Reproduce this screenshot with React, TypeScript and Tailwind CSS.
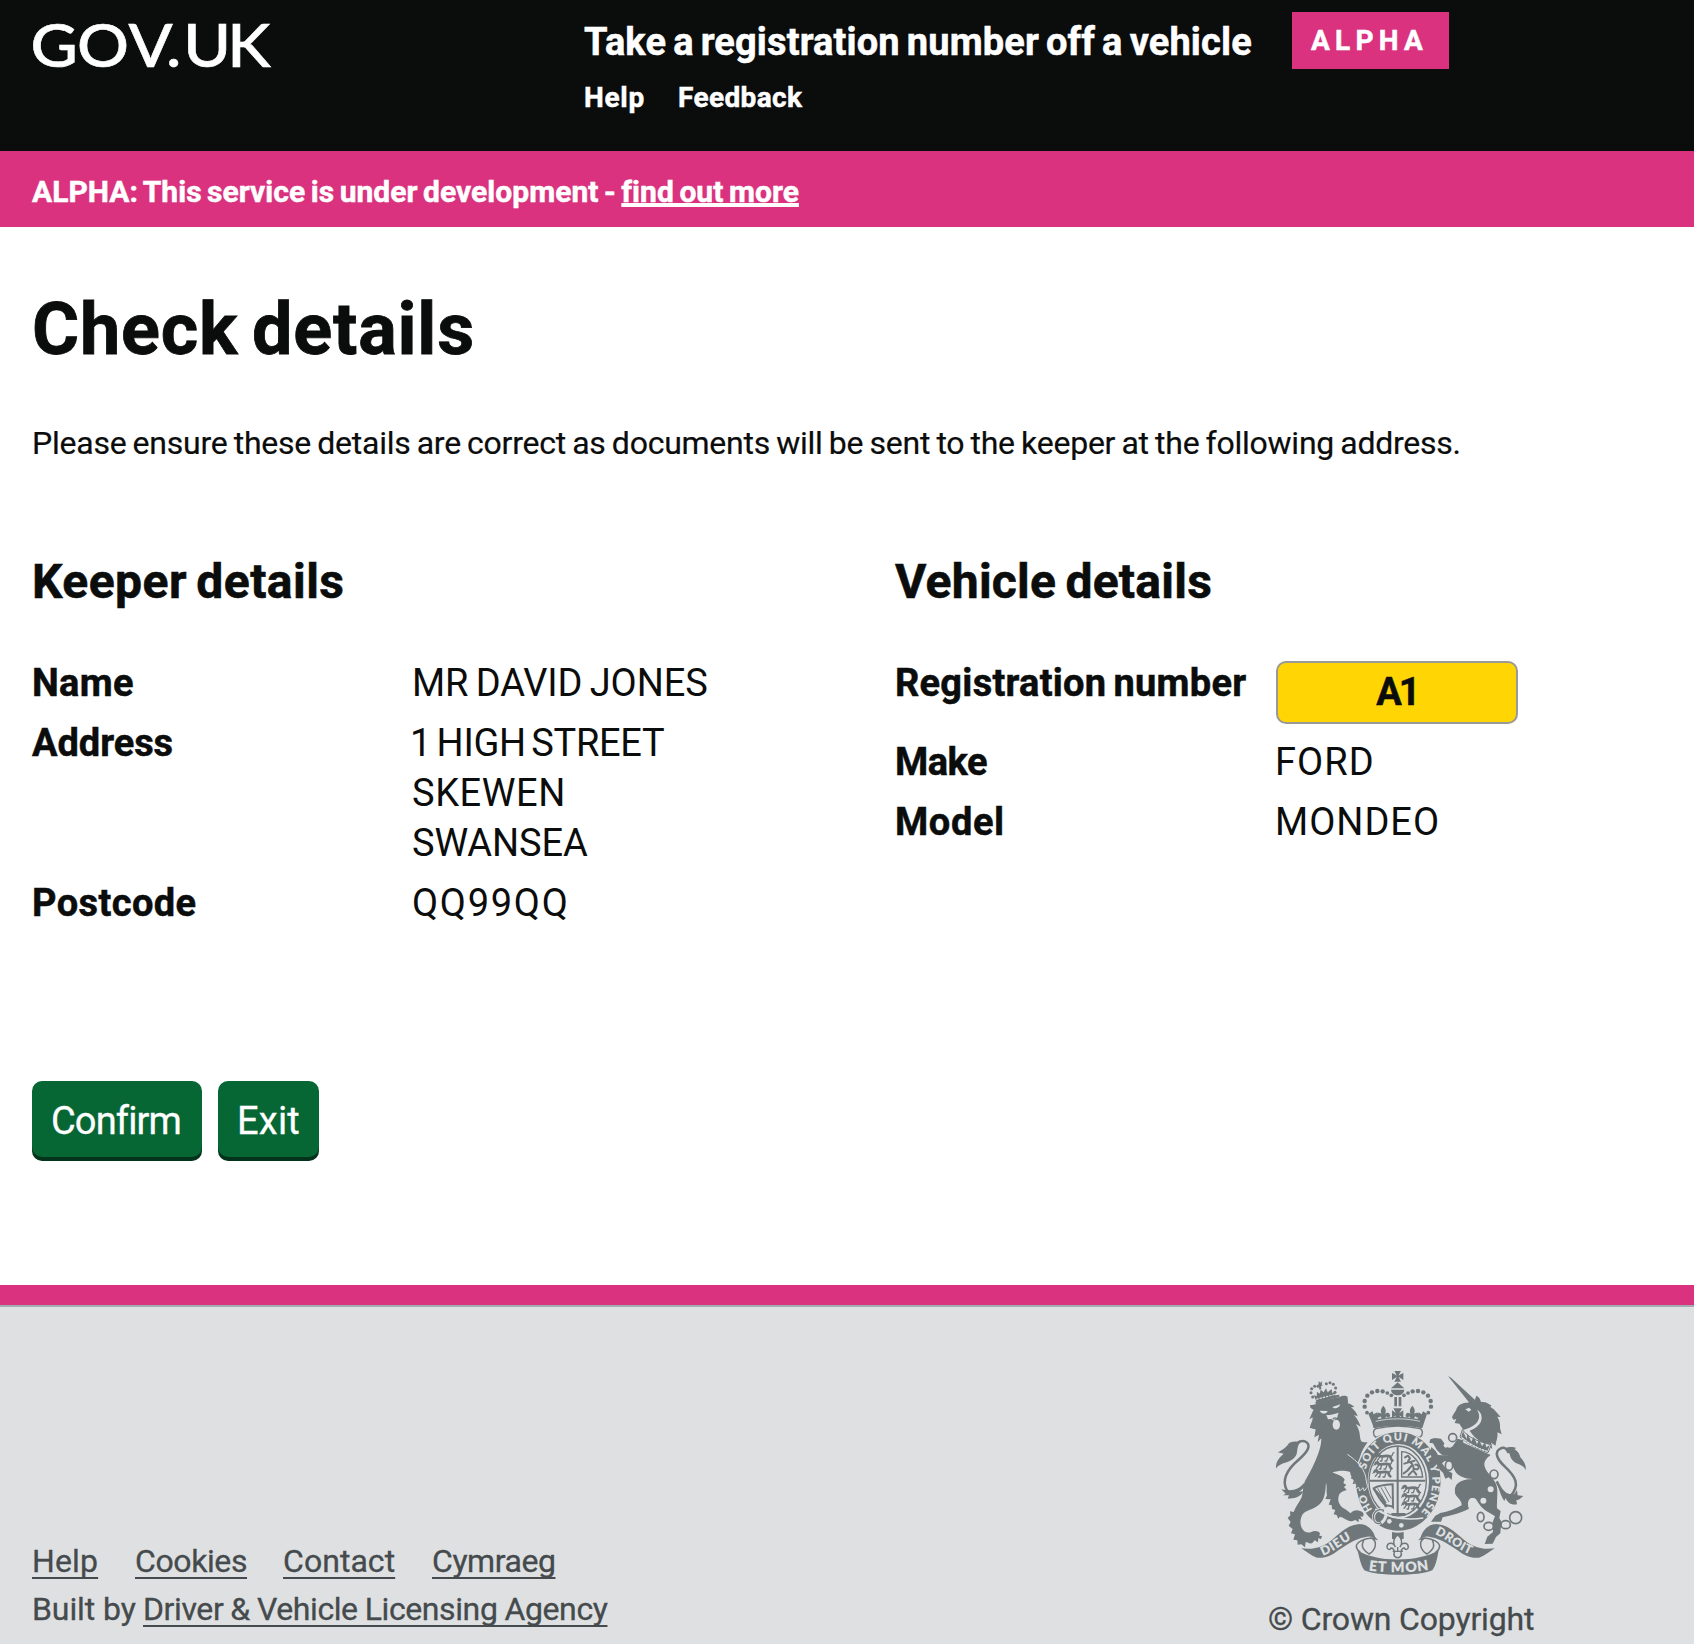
import React from 'react';

const INK = '#6f777b';
const PAPER = '#dee0e2';

function Logo() {
  return (
    <svg width="280" height="80" viewBox="0 0 280 80" className="block" role="img" aria-label="GOV.UK">
      <text
        transform="scale(1.08 1)"
        x="28.3 71.2 119 153.6 169.6 210.4"
        y="67"
        fontFamily="Lato, sans-serif"
        fontSize="60"
        fontWeight="500"
        fill="#ffffff"
        stroke="#ffffff"
        strokeWidth="0.6"
      >
        GOV.UK
      </text>
    </svg>
  );
}

const crownPearls: [number, number, number][] = [
  [351, 173, 5], [344, 155, 6], [344, 138, 6], [352, 122, 6], [366, 112, 6], [382, 108, 6], [398, 109, 6], [412, 114, 5], [424, 121, 5],
  [535, 173, 5], [543, 155, 6], [542, 138, 6], [534, 122, 6], [520, 112, 6], [504, 108, 6], [488, 109, 6], [474, 114, 5], [462, 121, 5],
];

const lionPearls: [number, number, number][] = [
  [188, 126, 4], [183, 113, 4], [185, 101, 4], [194, 94, 4], [204, 94, 4], [255, 112, 4], [257, 99, 4], [250, 88, 4], [240, 83, 4], [229, 86, 4],
];

/* A passant lion, three of which fill an England quarter. */
function Passant({ x, y }: { x: number; y: number }) {
  return (
    <g transform={`translate(${x} ${y})`} fill="none" stroke={INK} strokeWidth="4.5" strokeLinecap="round" strokeLinejoin="round">
      <path d="M0 4 C2 -3 9 -2 9 4 C18 8 32 0 42 6 C44 10 42 14 48 17" strokeWidth="8" />
      <path d="M10 8 L3 17 M18 9 L16 19 L12 19 M34 9 L31 19 L26 19 M42 5 C54 4 44 -5 53 -6" strokeWidth="4" />
      <path d="M0 4 L-5 8" strokeWidth="3" />
    </g>
  );
}

function Fleur({ x, y, s = 1 }: { x: number; y: number; s?: number }) {
  return (
    <path
      transform={`translate(${x} ${y}) scale(${s})`}
      fill={INK}
      d="M0 -24 C9 -14 10 -6 4 5 C8 -3 18 -5 21 5 C22 12 15 16 11 11 C9 9 6 12 5 18 L9 26 H-9 L-5 18 C-6 12 -9 9 -11 11 C-15 16 -22 12 -21 5 C-18 -5 -8 -3 -4 5 C-10 -6 -9 -14 0 -24Z"
    />
  );
}

function Crest() {
  return (
    <svg width="300" height="240" viewBox="0 0 900 720" className="block" role="img" aria-label="Royal coat of arms">
      <defs>
        <path id="motto" d="M343 384 A101 124 0 0 1 547 380 A101 124 0 0 1 450 503" />
        <path id="motto-start" d="M392 488 A101 124 0 0 1 343 366" />
        <path id="ribbon-left" d="M219 602 C258 588 282 560 325 543" />
        <path id="ribbon-right" d="M554 537 C597 556 626 590 682 606" />
        <path id="ribbon-mid" d="M356 646 C400 654 490 654 536 645" />
      </defs>

      {/* Royal crown */}
      <g fill={INK}>
        <path d="M426 54 L434 58 L440 62 L437 55 L433 48 H453 L449 55 L446 62 L452 58 L460 54 V75 L452 70 L446 66 L449 73 L453 80 H433 L437 73 L440 66 L434 70 L426 75Z" />
        <path d="M443 82 L463 100 H423Z" />
        <path d="M423 104 H463 C462 114 454 121 443 121 C432 121 424 114 423 104Z" />
        <path d="M433 126 H441 V154 H433Z M446 126 H454 V154 H446Z" />
        <path d="M426 166 L438 174 L430 160 H456 L448 174 L460 166 V190 L448 181 L456 197 H430 L438 181 L426 190Z" />
        {crownPearls.map(([x, y, r]) => (
          <circle key={`${x}-${y}`} cx={x} cy={y} r={r + 0.6} />
        ))}
        <Fleur x={400} y={175} s={0.95} />
        <Fleur x={487} y={175} s={0.95} />
        <path d="M355 176 L367 169 L371 178 L382 172 L384 192 C425 184 461 184 503 192 L505 172 L515 178 L519 169 L531 176 C527 190 523 200 517 220 C470 211 418 211 371 220 C367 202 360 190 355 176Z" />
      </g>
      <path d="M377 199 C420 189 466 189 510 199" fill="none" stroke={PAPER} strokeWidth="2.5" />
      <path d="M378 221 C420 211 466 211 510 221 C520 225 519 240 510 247 C466 230 420 230 378 247 C368 240 368 225 378 221Z" fill={PAPER} stroke={INK} strokeWidth="4" />

      {/* Lion */}
      <g fill={INK}>
        {lionPearls.map(([x, y, r]) => (
          <circle key={`${x}-${y}`} cx={x} cy={y} r={r + 0.6} />
        ))}
        <path d="M206 78 L211 83 L217 79 L215 88 L219 92 L213 92 L214 103 L208 104 L207 94 L202 92 L206 87Z" />
        <path d="M191 120 L200 124 L201 110 L209 116 L212 104 L221 112 L228 100 L233 112 L245 102 L247 114 L255 112 L256 125 L200 142Z" />
      </g>
      <path d="M199 133 L254 119" stroke={PAPER} strokeWidth="3.5" strokeDasharray="7 3" fill="none" />
      <path
        fill={INK}
        d="M200 146 C222 135 242 130 268 127 C280 120 288 122 293 126 C292 134 296 139 293 145 C302 147 308 151 313 156 L303 157 C313 165 319 172 323 184 L312 180 C321 190 327 201 332 215 L318 207 C324 219 329 228 330 245 C332 262 336 262 353 262 C340 279 335 290 331 304 L339 329 C347 346 355 363 353 382 L357 395 L345 408 L343 397 L330 408 L330 395 L317 400 L320 386 L308 387 L312 374 L302 370 L310 357 C302 347 285 348 270 347 L247 352 C264 360 278 363 284 374 L280 384 L289 390 L282 396 L290 405 C278 408 268 413 266 424 C262 438 268 449 278 458 C288 464 293 467 302 475 C308 466 321 463 330 468 C340 470 344 479 338 485 L331 484 L337 495 L326 491 L326 502 L316 495 L306 499 C292 499 284 488 270 485 L265 491 L260 480 L251 478 L256 465 L246 462 L245 450 L236 449 L242 433 L226 432 L231 421 C228 408 232 395 228 383 C226 411 225 434 206 450 C190 464 168 465 157 479 C151 491 149 505 155 518 C162 532 173 535 184 531 C193 526 205 527 210 535 L208 542 L216 543 L213 553 L205 549 L204 562 L194 556 L187 564 C180 568 174 562 167 561 L165 577 L154 568 L143 569 L142 556 L130 554 L135 538 L123 535 L128 522 L116 512 L122 501 L113 489 L121 481 L120 469 L131 471 C136 457 146 445 155 427 C160 411 158 390 167 374 C181 352 194 325 204 298 C212 278 214 261 214 250 L203 262 L207 239 L193 247 L197 223 C187 224 182 216 179 221 C180 207 189 198 188 187 L178 193 C184 179 187 171 191 164 C183 161 178 157 181 150 C188 150 194 148 200 146Z"
      />
      <path d="M197 145 C220 133 245 126 268 123" stroke={INK} strokeWidth="7" fill="none" />
      <g fill={PAPER}>
        <path d="M209 167 L233 168 C228 179 215 178 209 167Z M247 156 L271 148 C267 160 253 163 247 156Z" />
        <path d="M229 180 C243 180 251 177 266 173 C260 187 264 193 255 191 L252 198 L244 192 L234 193Z" />
        <ellipse cx="259" cy="209" rx="11" ry="15" />
      </g>
      <path d="M248 193 C252 187 258 187 264 193" stroke={INK} strokeWidth="4" fill="none" />
      <path d="M165 388 C143 414 122 424 110 405 C93 371 118 338 145 315 C173 290 182 274 171 263 C158 252 141 260 129 277" stroke={INK} strokeWidth="7.5" fill="none" />
      <path fill={INK} d="M150 263 C132 256 125 262 117 264 C112 274 99 285 83 292 L101 296 C88 308 77 319 78 340 C95 318 122 327 137 303 C145 290 138 278 150 263Z" />
      <path fill={INK} d="M161 385 C149 402 130 410 94 403 L107 416 L99 421 L117 421 L113 431 C132 431 151 428 160 409 L146 410 C157 402 166 394 161 385Z" />

      {/* Garter and shield */}
      <ellipse cx="445" cy="379" rx="131" ry="152" fill={PAPER} />
      <ellipse cx="445" cy="379" rx="127" ry="148" fill={INK} />
      <ellipse cx="445" cy="379" rx="92" ry="112" fill={PAPER} />
      <ellipse cx="443" cy="378" rx="86" ry="105" fill="none" stroke={INK} strokeWidth="4" />
      <path d="M443 274 V481 M359 377 H526" stroke={INK} strokeWidth="6" />
      <Passant x={379} y={299} />
      <Passant x={376} y={323} />
      <Passant x={373} y={347} />
      <Passant x={459} y={394} />
      <Passant x={459} y={419} />
      <Passant x={459} y={443} />
      <path d="M455 290 C488 291 513 322 518 366 H455Z" fill="none" stroke={INK} strokeWidth="4" />
      <path d="M465 307 L474 302 L480 310 L474 319 C486 323 493 333 490 347 L499 359 M484 333 L471 348 L461 355 M475 322 L463 326 M482 321 L494 317 M486 350 L476 360 M491 341 C512 350 509 327 496 329" fill="none" stroke={INK} strokeWidth="6" strokeLinecap="round" strokeLinejoin="round" />
      <path d="M371 400 C386 391 410 389 428 388 L429 457 C420 449 415 456 405 449 C391 438 383 420 371 400Z" fill="none" stroke={INK} strokeWidth="6" />
      <path d="M383 400 L409 444 M393 397 L417 441 M404 395 L424 431" stroke={INK} strokeWidth="3" />
      <path d="M371 402 C391 421 402 432 408 457" stroke={INK} strokeWidth="7" fill="none" />
      <path d="M424 474 H466 V483 H424Z" fill={INK} />
      <path d="M376 462 C420 490 468 497 520 489" stroke={PAPER} strokeWidth="5" fill="none" />
      <path d="M399 464 C382 462 367 475 371 490 C371 502 381 508 391 505 M404 466 C413 481 407 493 394 504" fill="none" stroke={PAPER} strokeWidth="9" />
      <path d="M402 466 C382 458 367 475 371 490 C371 503 381 508 391 504 M382 474 L393 480 M378 491 L391 490" fill="none" stroke={INK} strokeWidth="4" />
      <g fill={PAPER}>
        <circle cx="418" cy="499" r="7" />
        <circle cx="454" cy="511" r="7" />
      </g>
      <path fill={INK} stroke={PAPER} strokeWidth="3" d="M292 298 C322 318 348 344 349 380 L353 395 L343 408 L339 398 L329 408 L326 397 L315 402 L318 388" />
      <path fill={INK} d="M290 300 C320 318 342 344 346 380 L320 392 L302 360 Z" />
      <g fill={PAPER} fontFamily="Lato, sans-serif" fontWeight="800">
        <text fontSize="33" letterSpacing="3">
          <textPath href="#motto" startOffset="40">SOIT QUI MAL Y PENSE</textPath>
        </text>
        <text fontSize="32" letterSpacing="1">
          <textPath href="#motto-start" startOffset="34">HO</textPath>
        </text>
      </g>

      {/* Unicorn */}
      <g fill={INK}>
        <path d="M594 63 L603 68 L676 136 L661 147Z" />
        <path d="M674 137 L679 122 C687 126 691 131 693 141 C708 139 716 147 724 151 L721 156 C734 162 743 177 752 186 L742 185 C750 198 751 209 750 220 L755 238 L742 232 C745 247 738 257 737 272 L723 263 L727 282 C708 265 680 260 659 227 C671 224 690 212 694 196 C697 183 693 171 681 165 C695 184 686 207 659 218 L640 225 L628 206 L614 204 L619 191 L611 195 L606 187 C610 176 615 172 619 164 C621 153 632 147 642 144 C652 142 664 142 674 137Z" />
        <path d="M623 251 L639 256 L640 263 L722 300 C711 308 702 318 703 331 C707 350 723 362 735 381 C748 402 739 433 741 460 L752 468 L748 490 L754 499 L751 535 L738 546 L728 566 L704 567 L712 545 L729 531 L728 501 L735 484 C721 474 698 465 688 448 C679 435 679 427 665 429 C655 430 650 448 657 461 C639 472 603 481 578 487 L573 500 L543 500 L556 482 L571 474 C594 470 617 462 635 451 C636 438 624 431 616 418 C612 398 617 384 637 377 C650 372 660 373 668 372 C638 370 621 361 613 344 C604 327 607 304 592 302 C575 302 573 297 560 284 L549 265 L538 263 L541 253 L554 249 L573 251 L585 268 C594 282 601 280 608 274Z" />
        <path d="M544 276 L557 288 L564 300 L602 302 L612 325 L584 318 L576 325 L591 346 L607 355 L605 375 L596 367 L586 371 L579 353 C565 342 561 326 551 315 C541 307 541 293 544 276Z" />
      </g>
      <path d="M646 163 L658 158 L664 165 L656 170Z" fill={PAPER} />
      <path d="M637 224 C653 247 686 261 724 269 L714 293 C681 282 655 268 630 246Z" fill={PAPER} stroke={INK} strokeWidth="3" />
      <path d="M634 245 C658 265 684 279 712 289 L720 270 L709 277 L705 262 L696 273 L687 254 L681 268 L671 245 L664 260 L652 235 L650 253 L639 229Z" fill={INK} />
      <path d="M636 249 C657 267 684 282 710 288" fill="none" stroke={PAPER} strokeWidth="4" strokeDasharray="6 4" />
      <g fill={PAPER} stroke={INK} strokeWidth="5">
        <circle cx="608" cy="248" r="12" />
        <ellipse cx="597" cy="332" rx="11" ry="14" />
        <ellipse cx="732" cy="358" rx="12" ry="13" />
        <ellipse cx="692" cy="486" rx="10" ry="14" />
        <ellipse cx="716" cy="514" rx="14" ry="12" />
        <ellipse cx="767" cy="509" rx="14" ry="12" />
        <circle cx="797" cy="488" r="18" />
      </g>
      <g fill={PAPER}>
        <circle cx="588" cy="271" r="7" />
        <circle cx="722" cy="403" r="9" />
        <circle cx="700" cy="437" r="9" />
      </g>
      <path d="M740 379 C749 397 758 415 779 423 M780 425 C813 390 796 364 764 334 C742 314 731 291 751 281 C762 274 770 280 776 294" fill="none" stroke={INK} strokeWidth="7.5" />
      <path fill={INK} d="M763 280 C780 274 791 276 798 279 L794 283 C806 291 809 299 811 307 C818 315 829 326 827 346 C819 325 800 331 787 315 C775 300 785 294 763 280Z" />
      <path fill={INK} d="M742 387 C754 409 773 421 793 417 L801 405 L803 421 L820 423 C812 430 808 435 799 436 L801 448 C782 451 771 441 767 429 L763 438 C754 425 749 410 742 387Z" />

      {/* Motto ribbon */}
      <path d="M327 510 C353 520 362 535 378 552 L365 549 C347 550 320 559 319 574 C319 583 326 588 331 592 M341 556 C330 577 344 588 357 597 C376 586 385 561 365 549" fill="none" stroke={INK} strokeWidth="4.5" />
      <path d="M561 510 C534 520 526 535 511 552 L523 549 C541 550 568 559 569 574 C569 583 562 588 557 592 M547 556 C558 577 544 588 531 597 C512 586 503 561 523 549" fill="none" stroke={INK} strokeWidth="4.5" />
      <g fill={INK}>
        <path d="M154 580 C196 586 225 573 249 552 C275 529 299 505 337 508 C361 513 373 534 377 552 C365 543 354 543 345 547 C313 552 285 573 257 592 C236 607 219 610 201 608 C182 602 169 589 154 580Z" />
        <path d="M734 580 C692 586 663 573 639 552 C613 529 589 505 551 508 C527 513 515 534 511 552 C523 543 534 543 543 547 C575 552 603 573 631 592 C652 607 669 610 687 608 C706 602 719 589 734 580Z" />
        <path d="M322 585 C374 623 510 623 566 585 C562 609 558 631 547 646 C508 664 380 664 343 646 C332 631 329 609 322 585Z" />
      </g>
      <g fill={PAPER} fontFamily="Lato, sans-serif" fontWeight="800">
        <text fontSize="38" letterSpacing="2.5">
          <textPath href="#ribbon-left">DIEU</textPath>
        </text>
        <text fontSize="37" letterSpacing="1.6">
          <textPath href="#ribbon-right">DROIT</textPath>
        </text>
        <text fontSize="43" letterSpacing="2.4">
          <textPath href="#ribbon-mid">ET MON</textPath>
        </text>
      </g>

      {/* Pendant fleur-de-lis */}
      <path d="M426 531 C437 534 449 534 461 531 V552 H426Z" fill={INK} />
      <path d="M443 539 C460 554 456 567 450 576 C456 560 474 562 475 576 C474 584 466 586 463 579 C457 579 454 584 453 591 C457 603 450 608 443 608 C436 608 429 603 433 591 C432 584 429 579 423 579 C420 586 412 584 411 576 C412 562 430 560 436 576 C430 567 426 554 443 539Z" fill={PAPER} stroke={INK} strokeWidth="4.5" />
      <path d="M428 589 H459 M443 576 V588" stroke={INK} strokeWidth="4" />
    </svg>
  );
}

function Row({ label, labelClass, children }: { label: string; labelClass: string; children: React.ReactNode }) {
  return (
    <div className="flex">
      <dt className={`w-[380px] shrink-0 whitespace-nowrap font-bold [-webkit-text-stroke:0.5px] ${labelClass}`}>{label}</dt>
      <dd className="whitespace-nowrap">{children}</dd>
    </div>
  );
}

const linkClass =
  'underline decoration-2 underline-offset-[5px] [text-decoration-skip-ink:none] whitespace-nowrap';

export default function App() {
  return (
    <div className="flex h-[1644px] w-[1694px] flex-col overflow-hidden bg-white font-['Roboto',sans-serif] text-[#0b0c0c]">
      <header className="flex h-[151px] shrink-0 bg-[#0b0c0c] font-bold text-white [-webkit-text-stroke:0.5px]">
        <div className="w-[584px] shrink-0">
          <Logo />
        </div>
        <div className="w-[708px] shrink-0 pt-[17px]">
          <div className="whitespace-nowrap text-[38px] leading-[50px] tracking-[0.13px] [word-spacing:-2.5px]">
            Take a registration number off a vehicle
          </div>
          <nav className="mt-[11px] flex text-[28px] leading-10">
            <a className="w-[94px] tracking-[0.7px]">Help</a>
            <a className="tracking-[0.37px]">Feedback</a>
          </nav>
        </div>
        <div className="mt-3 h-[57px] w-[157px] bg-[#da327f] pl-[19px] text-[28px] leading-[57px] tracking-[5.24px]">
          ALPHA
        </div>
      </header>

      <div className="h-[76px] shrink-0 bg-[#da327f] pl-8 pt-[5px] text-[30px] font-bold leading-[72px] tracking-[0.04px] text-white [-webkit-text-stroke:0.5px] [word-spacing:-2px]">
        ALPHA: This service is under development -{' '}
        <a className="underline decoration-[4px] underline-offset-[1px] [text-decoration-skip-ink:none]">find out more</a>
      </div>

      <main className="flex grow flex-col pl-8">
        <h1 className="mt-[63px] text-[72px] font-bold leading-[80px] tracking-[0.8px] [-webkit-text-stroke:0.8px] [word-spacing:-5px]">Check details</h1>
        <p className="mt-[49px] whitespace-nowrap text-[32px] leading-[48px] tracking-[-0.24px] [-webkit-text-stroke:0.2px] [word-spacing:-1.5px]">
          Please ensure these details are correct as documents will be sent to the keeper at the following address.
        </p>

        <div className="mt-[85px] flex">
          <section className="w-[863px] shrink-0">
            <h2 className="text-[48px] font-bold leading-[60px] tracking-[0.45px] [-webkit-text-stroke:0.6px] [word-spacing:-3px]">Keeper details</h2>
            <dl className="mt-[46px] flex flex-col gap-2.5 text-[38px] leading-[50px]">
              <Row label="Name" labelClass="tracking-[0.3px]">
                <span className="tracking-[-0.1px] [word-spacing:-2px]">MR DAVID JONES</span>
              </Row>
              <Row label="Address" labelClass="tracking-[-0.05px]">
                <span className="-ml-0.5 block tracking-[-0.33px] [word-spacing:-3.5px]">1 HIGH STREET</span>
                <span className="block tracking-[0.6px]">SKEWEN</span>
                <span className="block tracking-[-0.09px]">SWANSEA</span>
              </Row>
              <Row label="Postcode" labelClass="tracking-[0.4px]">
                <span className="tracking-[1.7px]">QQ99QQ</span>
              </Row>
            </dl>
          </section>
          <section>
            <h2 className="text-[48px] font-bold leading-[60px] tracking-[0.25px] [-webkit-text-stroke:0.6px] [word-spacing:-3px]">Vehicle details</h2>
            <dl className="mt-[46px] flex flex-col gap-2.5 text-[38px] leading-[50px]">
              <Row label="Registration number" labelClass="tracking-[0.25px] [word-spacing:-2.5px]">
                <div className="my-[3px] ml-px flex h-[63px] w-[242px] items-center justify-center rounded-[10px] border-2 border-[#999999] bg-[#ffd504] pb-0.5 font-bold tracking-[-3px] [-webkit-text-stroke:0.5px]">
                  A1
                </div>
              </Row>
              <Row label="Make" labelClass="tracking-[-0.51px]">
                <span className="tracking-[1.1px]">FORD</span>
              </Row>
              <Row label="Model" labelClass="tracking-[0.6px]">
                <span className="tracking-[1px]">MONDEO</span>
              </Row>
            </dl>
          </section>
        </div>

        <div className="mt-[153px] flex gap-4 text-[38px] leading-[72px] text-white [-webkit-text-stroke:0.3px]">
          <button className="h-[76px] w-[170px] rounded-[10px] bg-[#066634] pr-0.5 pt-1 tracking-[-0.85px] shadow-[0_4px_0_#03331a]">
            Confirm
          </button>
          <button className="h-[76px] w-[101px] rounded-[10px] bg-[#066634] pt-1 tracking-[0.2px] shadow-[0_4px_0_#03331a]">
            Exit
          </button>
        </div>
      </main>

      <div className="h-5 shrink-0 bg-[#da327f]" />
      <footer className="flex h-[339px] shrink-0 border-t-2 border-[#a1acb2] bg-[#dee0e2] pl-8 text-[32px] leading-[48px] text-[#454a4c] [-webkit-text-stroke:0.3px]">
        <div className="flex w-[1218px] shrink-0 flex-col justify-end pb-[11px]">
          <ul className="flex">
            <li className="w-[103px]"><a className={`${linkClass} tracking-[0.14px]`}>Help</a></li>
            <li className="w-[148px]"><a className={`${linkClass} tracking-[-0.4px]`}>Cookies</a></li>
            <li className="w-[149px]"><a className={`${linkClass} tracking-[0.05px]`}>Contact</a></li>
            <li><a className={`${linkClass} tracking-[-0.45px]`}>Cymraeg</a></li>
          </ul>
          <div className="flex">
            <span className="w-[111px] tracking-[-0.1px]">Built by</span>
            <a className={`${linkClass} tracking-[-0.4px] [word-spacing:-0.5px]`}>Driver &amp; Vehicle Licensing Agency</a>
          </div>
        </div>
        <div className="w-[300px] pt-12">
          <Crest />
          <p className="whitespace-nowrap pl-[18px] tracking-[-0.16px]">© Crown Copyright</p>
        </div>
      </footer>
    </div>
  );
}
